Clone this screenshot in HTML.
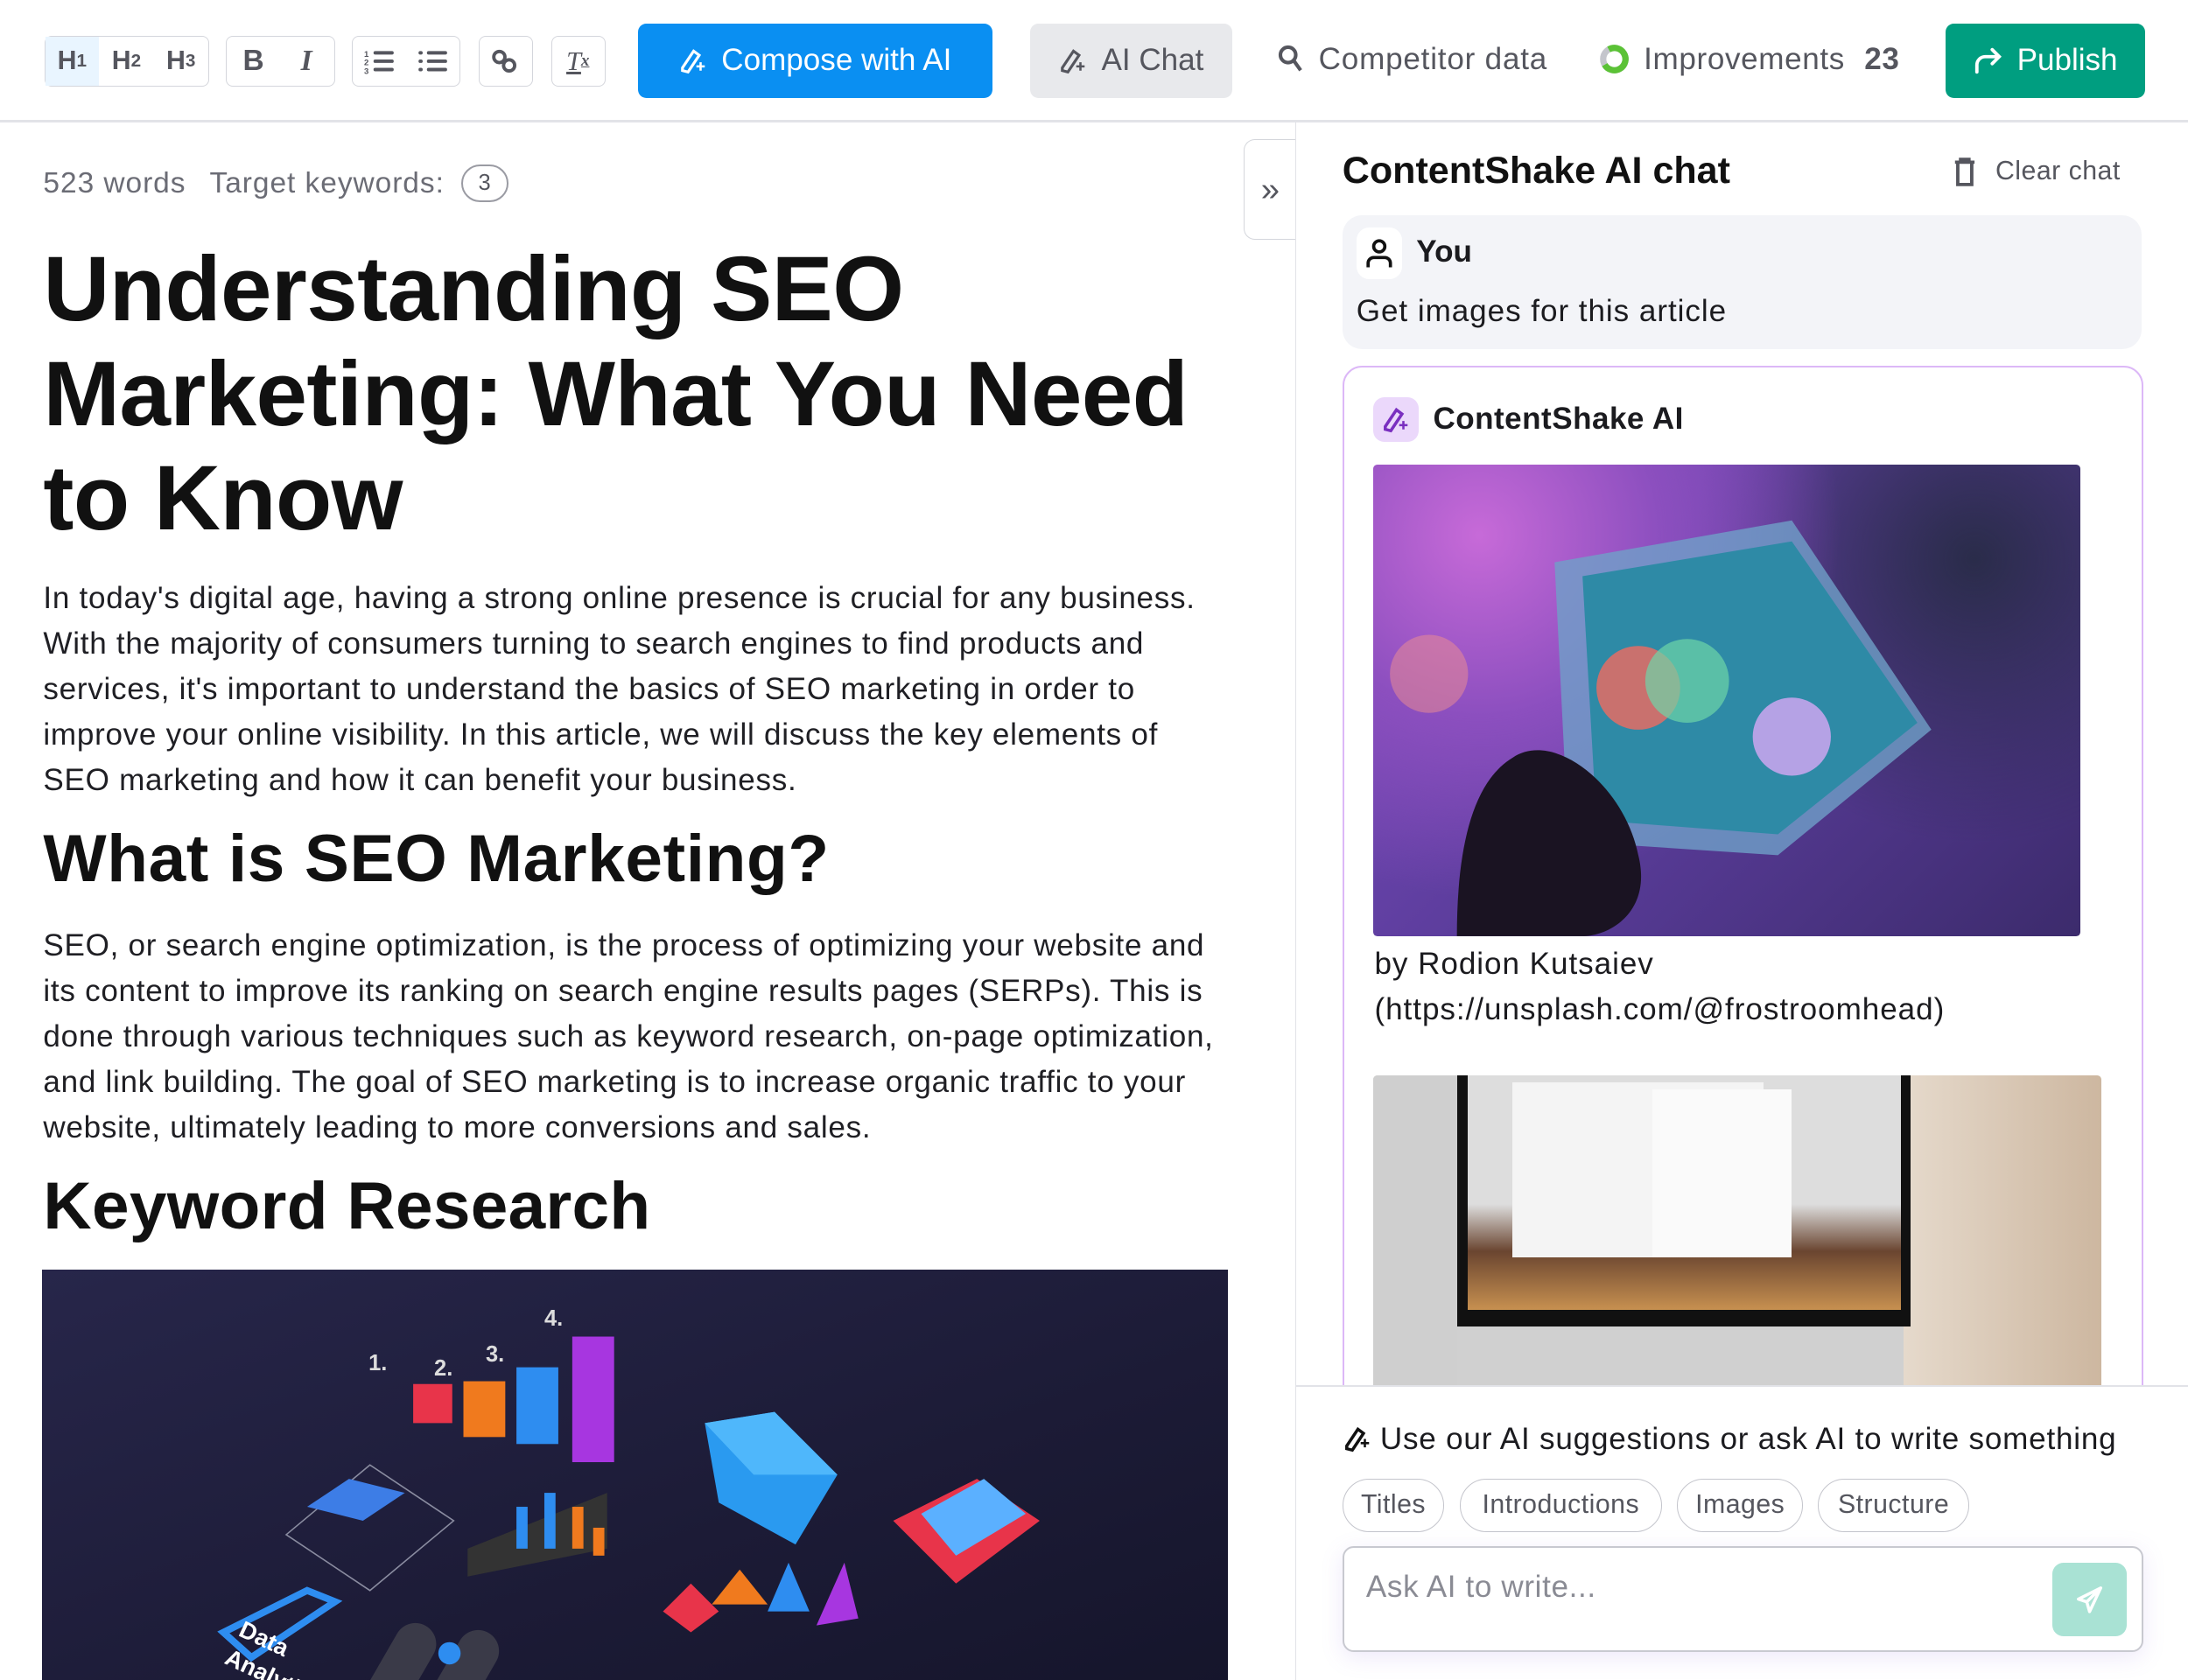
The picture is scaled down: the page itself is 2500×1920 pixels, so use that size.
<!DOCTYPE html>
<html><head><meta charset="utf-8"><style>
*{box-sizing:border-box;margin:0;padding:0}
html,body{width:2500px;height:1920px;overflow:hidden;background:#fff}
#z{zoom:1.59439;width:1568px;height:1205px;position:relative;font-family:"Liberation Sans",sans-serif;color:#1b1b1f;overflow:hidden}
.a{position:absolute}
.tb{position:absolute;top:26px;height:36px;border:1px solid #d4d6dc;border-radius:5px;display:flex;align-items:center;color:#55565e;font-size:19px;font-weight:bold}
.tb span{display:flex;align-items:center;justify-content:center;height:100%}
.p{font-size:22px;line-height:32.5px;color:#1f1f24;position:absolute;left:31px;white-space:nowrap;letter-spacing:0.45px}
.chip{position:absolute;top:1060px;height:38px;border:1px solid #c4c5cc;border-radius:19px;font-size:19px;color:#55565e;display:flex;align-items:center;justify-content:center;letter-spacing:0.3px}
</style></head><body><div id="z">
<!-- top bar -->
<div class="a" style="left:0;top:0;width:1568px;height:88px;border-bottom:2px solid #e2e3e8;background:#fff"></div>
<div class="tb" style="left:32px;width:118px"><span style="width:38px;background:#e9f5ff">H<small style="font-size:13px">1</small></span><span style="width:40px">H<small style="font-size:13px">2</small></span><span style="width:38px">H<small style="font-size:13px">3</small></span></div>
<div class="tb" style="left:162px;width:78px;font-size:21px"><span style="width:38px">B</span><span style="width:38px;font-style:italic;font-family:'Liberation Serif',serif">I</span></div>
<div class="tb" style="left:252px;width:78px"><span style="width:39px"><svg width="22" height="20" viewBox="0 0 22 20"><g stroke="#55565e" stroke-width="2.5" stroke-linecap="round"><path d="M8 4h12M8 10h12M8 16h12"/></g><text x="0" y="7" font-size="6" fill="#55565e">1</text><text x="0" y="13" font-size="6" fill="#55565e">2</text><text x="0" y="19" font-size="6" fill="#55565e">3</text></svg></span><span style="width:39px"><svg width="22" height="20" viewBox="0 0 22 20"><g stroke="#55565e" stroke-width="2.5" stroke-linecap="round"><path d="M8 4h12M8 10h12M8 16h12M2 4h.5M2 10h.5M2 16h.5"/></g></svg></span></div>
<div class="tb" style="left:343px;width:39px"><span style="width:37px"><svg width="20" height="20" viewBox="0 0 20 20" fill="none" stroke="#55565e" stroke-width="2.4"><rect x="2" y="3" width="8" height="8" rx="4" transform="rotate(45 6 7)"/><rect x="9" y="9" width="8" height="8" rx="4" transform="rotate(45 13 13)"/></svg></span></div>
<div class="tb" style="left:395px;width:39px"><span style="width:37px;font-family:'Liberation Serif',serif;font-style:italic;font-weight:normal;text-decoration:underline">T<small style="font-size:12px;font-weight:bold">x</small></span></div>
<div class="a" style="left:457px;top:17px;width:254px;height:53px;background:#0a8ff2;border-radius:6px;color:#fff;font-size:22px;display:flex;align-items:center;justify-content:center;gap:9px"><svg width="22" height="22" viewBox="0 0 22 22" fill="none" stroke="#fff" stroke-width="2"><path d="M3 16l8-12 4 3-8 12-4-1z"/><path d="M16 12v6M13 15h6" stroke-width="1.6"/></svg>Compose with AI</div>
<div class="a" style="left:738px;top:17px;width:145px;height:53px;background:#e8e9ec;border-radius:6px;color:#55565e;font-size:22px;display:flex;align-items:center;justify-content:center;gap:9px"><svg width="22" height="22" viewBox="0 0 22 22" fill="none" stroke="#55565e" stroke-width="2"><path d="M3 16l8-12 4 3-8 12-4-1z"/><path d="M16 12v6M13 15h6" stroke-width="1.6"/></svg>AI Chat</div>
<div class="a" style="left:915px;top:30px;font-size:22px;color:#55565e;display:flex;align-items:center;gap:10px;letter-spacing:0.5px"><svg width="20" height="22" viewBox="0 0 20 22" fill="none" stroke="#55565e" stroke-width="2.6"><circle cx="8" cy="8" r="5.5"/><path d="M12 12l5 7"/></svg>Competitor data</div>
<div class="a" style="left:1146px;top:30px;font-size:22px;color:#55565e;display:flex;align-items:center;gap:10px;letter-spacing:0.4px"><svg width="22" height="22" viewBox="0 0 22 22"><circle cx="11" cy="11" r="8" fill="none" stroke="#c4c5cc" stroke-width="4.5"/><path d="M11 3a8 8 0 1 1-8 8" fill="none" stroke="#5bc236" stroke-width="4.5" transform="rotate(-30 11 11)"/></svg>Improvements <b style="margin-left:4px">23</b></div>
<div class="a" style="left:1394px;top:17px;width:143px;height:53px;background:#009e80;border-radius:6px;color:#fff;font-size:22px;display:flex;align-items:center;justify-content:center;gap:10px"><svg width="22" height="22" viewBox="0 0 22 22" fill="none" stroke="#fff" stroke-width="2.4" stroke-linecap="round"><path d="M3 19v-5a6 6 0 0 1 6-6h10M14 3l5 5-5 5"/></svg>Publish</div>

<!-- left content -->
<div class="a" style="left:31px;top:118px;font-size:21px;color:#6b6c75;display:flex;align-items:center;letter-spacing:0.6px">523 words<span style="margin-left:17px">Target keywords:</span><span style="margin-left:12px;width:34px;height:27px;border:1.5px solid #9a9ba3;border-radius:14px;font-size:16px;display:flex;align-items:center;justify-content:center;color:#55565e">3</span></div>
<div class="a" style="left:31px;top:170px;font-size:66px;line-height:75px;font-weight:bold;color:#111;letter-spacing:-0.4px;white-space:nowrap">Understanding SEO<br>Marketing: What You Need<br>to Know</div>
<div class="p" style="top:413px">In today's digital age, having a strong online presence is crucial for any business.<br>With the majority of consumers turning to search engines to find products and<br>services, it's important to understand the basics of SEO marketing in order to<br>improve your online visibility. In this article, we will discuss the key elements of<br>SEO marketing and how it can benefit your business.</div>
<div class="a" style="left:31px;top:588px;font-size:48px;font-weight:bold;color:#111;white-space:nowrap;letter-spacing:0.4px">What is SEO Marketing?</div>
<div class="p" style="top:662px">SEO, or search engine optimization, is the process of optimizing your website and<br>its content to improve its ranking on search engine results pages (SERPs). This is<br>done through various techniques such as keyword research, on-page optimization,<br>and link building. The goal of SEO marketing is to increase organic traffic to your<br>website, ultimately leading to more conversions and sales.</div>
<div class="a" style="left:31px;top:837px;font-size:48px;font-weight:bold;color:#111;white-space:nowrap;letter-spacing:0.2px">Keyword Research</div>
<div class="a" style="left:30px;top:910px;width:850px;height:300px;background:linear-gradient(160deg,#27264a,#1c1b36 60%,#15152b);overflow:hidden">
<svg width="850" height="300" viewBox="0 0 850 300">
<rect x="266" y="82" width="28" height="28" fill="#e8344a"/><rect x="302" y="80" width="30" height="40" fill="#f07a1e"/><rect x="340" y="70" width="30" height="55" fill="#2e8df0"/><rect x="380" y="48" width="30" height="90" fill="#a736e0"/>
<text x="234" y="72" fill="#ddd" font-size="16" font-weight="bold">1.</text><text x="281" y="76" fill="#ddd" font-size="16" font-weight="bold">2.</text><text x="318" y="66" fill="#ddd" font-size="16" font-weight="bold">3.</text><text x="360" y="40" fill="#ddd" font-size="16" font-weight="bold">4.</text>
<path d="M475 110l50-8 45 45-30 50-55-30z" fill="#2a9af0"/><path d="M475 110l50-8 45 45-60 0z" fill="#4fb7fb"/>
<path d="M175 190l60-50 60 40-60 50z" fill="none" stroke="#8a8ca0" stroke-width="1"/><path d="M190 170l30-20 40 10-30 20z" fill="#3d7de6"/>
<path d="M305 200l100-40v40l-100 20z" fill="#333"/><rect x="340" y="170" width="8" height="30" fill="#2e8df0"/><rect x="360" y="160" width="8" height="40" fill="#2e8df0"/><rect x="380" y="170" width="8" height="30" fill="#f07a1e"/><rect x="395" y="185" width="8" height="20" fill="#f07a1e"/>
<path d="M610 180l60-30 45 30-60 45z" fill="#e8344a"/><path d="M630 175l45-25 30 25-50 30z" fill="#5bb0ff"/>
<path d="M445 245l20-20 20 20-20 15z" fill="#e8344a"/><path d="M480 240l20-25 20 25z" fill="#f07a1e"/><path d="M520 245l15-35 15 35z" fill="#2e8df0"/><path d="M555 255l20-45 10 40z" fill="#a736e0"/>
<path d="M130 260l60-30 20 8-60 40z" fill="none" stroke="#2e8df0" stroke-width="5"/><text x="140" y="262" fill="#fff" font-size="17" font-weight="bold" transform="rotate(25 140 262)">Data</text><text x="130" y="282" fill="#fff" font-size="17" font-weight="bold" transform="rotate(25 130 282)">Analytics</text>
<rect x="240" y="250" width="30" height="80" rx="15" fill="#3a3a48" transform="rotate(30 255 290)"/><rect x="285" y="255" width="30" height="80" rx="15" fill="#3a3a48" transform="rotate(30 300 295)"/><circle cx="292" cy="275" r="8" fill="#2e8df0"/>
</svg></div>

<!-- collapse tab -->
<div class="a" style="left:891px;top:100px;width:38px;height:72px;border:1px solid #d4d6dc;border-right:none;border-radius:8px 0 0 8px;background:#fff;display:flex;align-items:center;justify-content:center;font-size:24px;color:#55565e">»</div>

<!-- right panel -->
<div class="a" style="left:928px;top:88px;width:640px;height:1117px;border-left:1px solid #e2e3e8;background:#fff"></div>
<div class="a" style="left:962px;top:107px;font-size:27px;font-weight:bold;color:#111">ContentShake AI chat</div>
<div class="a" style="left:1398px;top:112px;font-size:19px;color:#55565e;display:flex;align-items:center;gap:12px;letter-spacing:0.3px"><svg width="20" height="22" viewBox="0 0 20 22" fill="none" stroke="#55565e" stroke-width="2.4"><path d="M3 4h14M7 4V2h6v2M5 5v15h10V5"/></svg>Clear chat</div>
<div class="a" style="left:962px;top:154px;width:573px;height:96px;background:#f3f4f8;border-radius:14px"></div>
<div class="a" style="left:972px;top:163px;width:33px;height:37px;background:#fff;border-radius:9px;display:flex;align-items:center;justify-content:center"><svg width="20" height="22" viewBox="0 0 20 22" fill="none" stroke="#111" stroke-width="2.3"><circle cx="10" cy="6" r="4"/><path d="M2 21v-3a4 4 0 0 1 4-4h8a4 4 0 0 1 4 4v3"/></svg></div>
<div class="a" style="left:1015px;top:168px;font-size:22px;font-weight:bold">You</div>
<div class="a" style="left:972px;top:211px;font-size:22px;letter-spacing:0.6px">Get images for this article</div>
<div class="a" style="left:962px;top:262px;width:574px;height:760px;border:1.5px solid #dcb8f7;border-radius:14px"></div>
<div class="a" style="left:984px;top:285px;width:33px;height:32px;background:#ebd8fb;border-radius:8px;display:flex;align-items:center;justify-content:center"><svg width="22" height="22" viewBox="0 0 22 22" fill="none" stroke="#7a2fc0" stroke-width="2.2"><path d="M3 16l8-12 4 3-8 12-4-1z"/><path d="M16 12v6M13 15h6" stroke-width="1.6"/></svg></div>
<div class="a" style="left:1027px;top:288px;font-size:22px;font-weight:bold;letter-spacing:0.3px">ContentShake AI</div>
<div class="a" style="left:984px;top:333px;width:507px;height:338px;border-radius:3px;overflow:hidden;background:radial-gradient(circle at 15% 15%,#c76ad8 0,#8c4fbf 25%,transparent 50%),radial-gradient(circle at 85% 20%,#2a2c4a 0,transparent 40%),linear-gradient(135deg,#7b4cc0,#5a3c9a 50%,#3c2b6c)">
<svg width="507" height="338" viewBox="0 0 507 338"><path d="M130 70l170-30 100 150-110 90-150-10z" fill="#6fa0c8" opacity=".8"/><path d="M150 80l150-25 90 130-100 80-130-10z" fill="#2e8aa6"/><circle cx="190" cy="160" r="30" fill="#f06a60" opacity=".8"/><circle cx="225" cy="155" r="30" fill="#6ed6a8" opacity=".7"/><circle cx="300" cy="195" r="28" fill="#d7a7f5" opacity=".8"/><circle cx="40" cy="150" r="28" fill="#f09090" opacity=".5"/><path d="M100 210c30-20 80 20 90 70 10 40-20 58-40 58H60c0-60 10-110 40-128z" fill="#1a1322"/></svg></div>
<div class="a" style="left:985px;top:675px;font-size:22px;line-height:32.5px;letter-spacing:0.6px">by Rodion Kutsaiev<br>(https://unsplash.com/@frostroomhead)</div>
<div class="a" style="left:984px;top:771px;width:522px;height:225px;border-radius:3px;overflow:hidden;background:linear-gradient(90deg,#d8d6d2,#e5e2dd 20%,#e8ddd0 70%,#cdb7a0)">
<div class="a" style="left:60px;top:0;width:325px;height:180px;background:#111"></div>
<div class="a" style="left:68px;top:0;width:310px;height:168px;background:linear-gradient(180deg,#ddd 0,#ddd 55%,#6a4530 75%,#c79050)"></div>
<div class="a" style="left:100px;top:5px;width:180px;height:125px;background:#f4f4f4"></div>
<div class="a" style="left:200px;top:10px;width:100px;height:120px;background:#fafafa"></div>
<div class="a" style="left:20px;top:180px;width:360px;height:45px;background:#d0d0d0"></div>
<div class="a" style="left:0;top:0;width:60px;height:225px;background:#cfcfcf"></div>
</div>

<!-- bottom composer -->
<div class="a" style="left:929px;top:993px;width:639px;height:212px;background:#fff;border-top:1.5px solid #e2e3e8"></div>
<div class="a" style="left:962px;top:1019px;font-size:22px;display:flex;align-items:center;gap:5px;white-space:nowrap;letter-spacing:0.5px"><svg width="22" height="22" viewBox="0 0 22 22" fill="none" stroke="#111" stroke-width="2.2"><path d="M3 16l8-12 4 3-8 12-4-1z"/><path d="M16 11v6M13 14h6" stroke-width="1.6"/></svg>Use our AI suggestions or ask AI to write something</div>
<div class="chip" style="left:962px;width:73px">Titles</div>
<div class="chip" style="left:1046px;width:145px">Introductions</div>
<div class="chip" style="left:1202px;width:90px">Images</div>
<div class="chip" style="left:1303px;width:108px">Structure</div>
<div class="a" style="left:962px;top:1108px;width:574px;height:76px;border:1.5px solid #c8c9d0;border-radius:8px;box-shadow:0 4px 16px rgba(140,110,220,.15);background:#fff"></div>
<div class="a" style="left:979px;top:1125px;font-size:22px;color:#8a8b94;letter-spacing:0.4px">Ask AI to write...</div>
<div class="a" style="left:1471px;top:1120px;width:53px;height:53px;background:#a9e2d4;border-radius:8px;display:flex;align-items:center;justify-content:center"><svg width="22" height="22" viewBox="0 0 22 22" fill="none" stroke="#fff" stroke-width="2.2" stroke-linejoin="round"><path d="M19 3L3 11l6 2 2 7z M9 13l10-10"/></svg></div>
</div></body></html>
